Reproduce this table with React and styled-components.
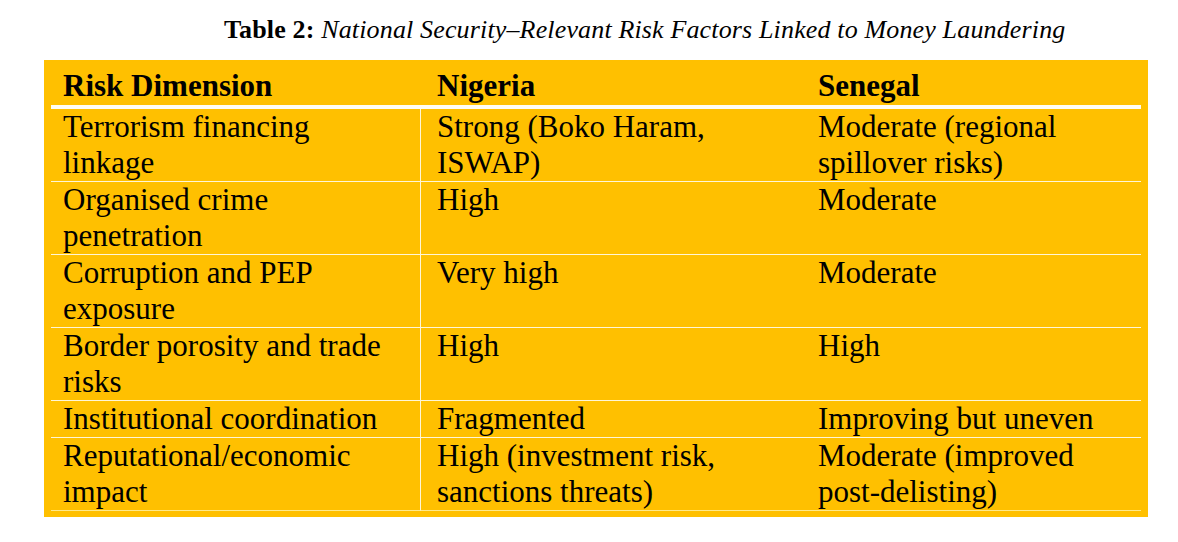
import React from 'react';
import styled, { createGlobalStyle } from 'styled-components';

const rows = [
    ['Terrorism financing linkage', 'Strong (Boko Haram, ISWAP)', 'Moderate (regional spillover risks)'],
    ['Organised crime penetration', 'High', 'Moderate'],
    ['Corruption and PEP exposure', 'Very high', 'Moderate'],
    ['Border porosity and trade risks', 'High', 'High'],
    ['Institutional coordination', 'Fragmented', 'Improving but uneven'],
    ['Reputational/economic impact', 'High (investment risk, sanctions threats)', 'Moderate (improved post-delisting)'],
];

export default () => (
    <Page>
        <GlobalStyle />
        <Caption>
            <Label>Table 2:</Label> <Heading>National Security–Relevant Risk Factors Linked to Money Laundering</Heading>
        </Caption>
        <Panel>
            <Grid>
                <HeadCell first>Risk Dimension</HeadCell>
                <HeadCell>Nigeria</HeadCell>
                <HeadCell>Senegal</HeadCell>
                {rows.map((row, i) =>
                    row.map((text, j) => (
                        <Cell key={`${i}-${j}`} col={j} last={i === rows.length - 1}>
                            {text}
                        </Cell>
                    ))
                )}
            </Grid>
        </Panel>
    </Page>
);

const GlobalStyle = createGlobalStyle`
    body {
        margin: 0;
        background: #fff;
        color: #000;
    }
`;

const Page = styled.div`
    width: 1178px;
    height: 542px;
    background: #fff;
    overflow: hidden;
`;

const Caption = styled.div`
    padding: 15px 0 0 224px;
    height: 60px;
    box-sizing: border-box;
    font-family: "Liberation Serif", serif;
    font-size: 26px;
    line-height: 30px;
    letter-spacing: 0.15px;
    white-space: nowrap;
`;

const Label = styled.span`
    font-weight: bold;
`;

const Heading = styled.span`
    font-style: italic;
`;

const Panel = styled.div`
    margin-left: 44px;
    width: 1104px;
    background: #ffc000;
    padding: 0 7px 6px;
    box-sizing: border-box;
`;

const Grid = styled.div`
    display: grid;
    grid-template-columns: 370px 381px 1fr;
    font-family: "Liberation Serif", serif;
    font-size: 31px;
    line-height: 36px;
`;

const HeadCell = styled.div`
    font-weight: bold;
    padding: 8px 0 1px ${p => (p.first ? '12px' : '16px')};
    border-bottom: 4px solid #fffdf4;
`;

const Cell = styled.div`
    padding: 0 20px 0 ${p => (p.col === 0 ? '12px' : '16px')};
    border-bottom: 1px solid ${p => (p.last ? '#ffe98a' : '#fff6d6')};
    border-right: ${p => (p.col === 0 ? '1px solid #fff6d6' : 'none')};
`;
